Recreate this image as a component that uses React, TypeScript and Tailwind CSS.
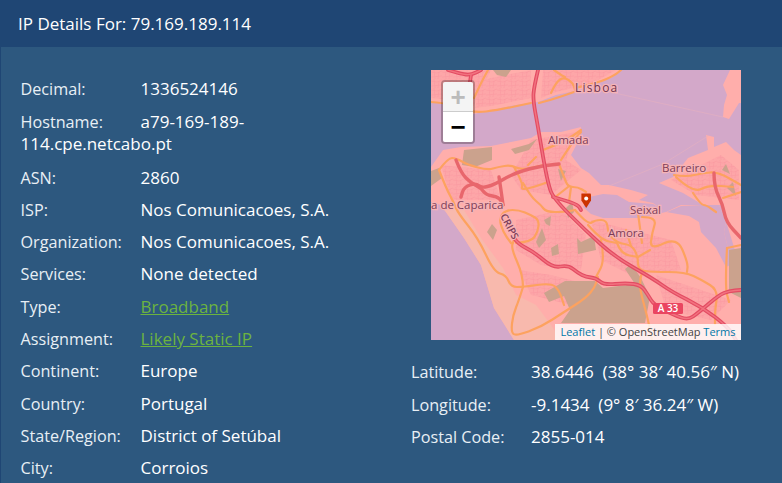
import React from "react";

const font = { fontFamily: '"Open Sans", sans-serif' };

// turns "x,y x,y ..." into a rounded path through the midpoints
function smooth(points: string) {
  const p = points.split(" ").map((s) => s.split(",").map(Number));
  let d = `M${p[0][0]} ${p[0][1]}`;
  for (let i = 1; i < p.length - 1; i++) {
    const mx = (p[i][0] + p[i + 1][0]) / 2;
    const my = (p[i][1] + p[i + 1][1]) / 2;
    d += ` Q${p[i][0]} ${p[i][1]} ${mx} ${my}`;
  }
  d += ` L${p[p.length - 1][0]} ${p[p.length - 1][1]}`;
  return d;
}

const landAreas = [
  "0,0 190,0 180,8 160,16 144,21 125,25 107,32 85,35 60,40 43,44 25,36 0,32",
  "299,0 292,15 296,25 293,35 292,47 298,49 308,33 310,33 310,0",
  "0,97 12,80 30,77 60,76 80,72 100,68 110,62 130,62 150,57 148,70 140,85 150,98 158,103 170,115 178,115 200,120 217,125 208,130 222,133 235,142 250,135 265,135 272,135 288,135 295,152 293,162 297,178 295,197 310,190 310,270 0,270",
  "228,113 242,107 257,88 277,80 275,65 283,67 283,77 295,72 303,80 310,85 310,200 290,135 272,135 252,123",
];

const waterAreas = [
  "152,137 158,127 172,124 186,125 198,132 222,134 236,142 250,136 272,135 288,135 295,152 293,162 297,178 295,197 285,178 270,162 268,152 258,146 235,142 208,148 172,148 160,144",
];

const urbanAreas = [
  "0,0 60,0 50,20 43,36 20,30 0,28",
  "50,10 100,0 100,28 60,36 44,38",
  "112,0 185,0 160,14 125,22 110,28",
  "100,70 145,62 135,90 150,100 120,125 90,120 80,105",
  "10,95 60,100 70,130 20,130",
  "85,150 130,140 155,165 150,200 110,195 85,180",
  "160,150 240,170 250,200 200,205 170,190",
  "240,110 290,85 308,100 308,130 265,125",
  "120,205 160,215 140,235 100,225 88,200",
  "225,205 300,230 280,250 235,240",
];

const brownAreas = [
  "113,223 134,211 164,211 172,218 204,214 194,199 200,194 210,208 219,227 214,253 130,253 139,240 133,226 118,232",
  "31,95 33,80 61,77 61,90 44,97",
  "0,101 8,98 11,108 0,116",
  "62,0 80,0 75,7 66,5",
  "80,79 98,74 106,69 98,80 84,84",
  "135,138 141,132 143,142 137,148",
  "113,150 120,146 119,156 115,154",
  "146,168 150,172 163,166 165,180 147,184",
  "105,172 111,158 115,170 108,178",
  "120,178 127,174 128,184 121,186",
  "298,180 310,178 310,228 298,222",
  "296,118 302,112 305,126",
  "127,99 135,101 130,111",
  "56,162 61,154 66,160 62,170",
  "291,100 295,94 299,104",
];

const orangeRoads = [
  "0,32 12,33 25,36 43,43 67,40 100,33",
  "43,28 50,13 57,0",
  "108,33 120,30 143,22",
  "120,23 125,12 133,7 142,13 144,20",
  "123,0 130,5 134,7",
  "144,18 167,13 184,5 190,0",
  "8,100 17,88 25,88 37,95 57,100 67,97 80,95 90,100 113,95",
  "8,100 15,118 23,133 27,143 47,168 63,202 75,205 80,217 92,217 120,213 128,220 133,235",
  "92,217 92,205 80,178 83,170",
  "92,217 88,230 82,245 80,262 85,266 110,257 133,242 155,228 164,217 167,207",
  "85,173 100,172 107,162 108,150 100,145 88,140 75,140 68,148 72,162 80,173",
  "83,97 92,113 90,120 103,117 117,112",
  "92,113 100,127 110,135 115,142 133,142 144,140",
  "105,87 97,95",
  "112,80 133,72 150,60",
  "130,90 143,70 150,62",
  "128,94 133,107 137,117 147,117 155,122",
  "123,128 137,117",
  "140,117 138,132",
  "144,140 157,155 164,150 176,150 177,163 186,173 201,175 207,187 207,200 221,202 254,202 271,210 287,220 284,240 284,254",
  "207,143 211,173",
  "211,147 226,147 221,163 219,180 246,167 257,193 256,202",
  "219,180 207,187",
  "211,203 207,213 216,245 221,270",
  "296,178 310,175",
  "296,178 294,217 298,232",
  "243,105 255,107 272,103 287,102 310,115",
  "245,107 262,123 278,115 302,117",
  "262,123 270,135 275,135 285,142",
  "292,128 310,122",
  "157,155 170,170 186,173",
  "170,170 174,190 165,207",
  "186,173 190,184 207,187",
  "195,160 200,176",
];

const motorways = [
  "107,0 103,17 102,30 107,57 112,87 117,113 122,128 154,160 184,187 221,208 241,222 271,237 297,257 305,270",
  "83,168 87,174 103,182 122,198 137,195 147,203 155,207 165,208 173,215 195,213 210,215 217,225 223,235 243,245 257,250 267,243 288,225 298,221 310,220",
  "122,127 133,130 147,135 150,140",
  "17,0 30,4 40,5 50,0",
  "40,5 39,12",
];

// the paler trunk roads on the west side and around Barreiro
const trunks = [
  "128,94 113,95 83,103 63,115 50,118 45,113 33,117 30,127",
  "25,90 30,103 40,113 50,118 55,125 68,127 72,135",
  "68,107 70,120 72,135",
  "283,103 283,117 292,135 295,152 310,168",
];

const labelClass = "fill-[#7d3d58] stroke-[#f7b4b6] [paint-order:stroke] text-[11.5px] font-medium";

function MapView() {
  return (
    <div className="relative ml-5 h-[270px] w-[310px] overflow-hidden">
      <svg viewBox="0 0 310 270" className="block h-[270px] w-[310px]" style={font}>
        <defs>
          <pattern id="streets" width="11" height="9" patternUnits="userSpaceOnUse">
            <rect width="11" height="9" fill="#fda6a8" />
            <path d="M0 2 L6 3 L11 1 M3 0 L4 9 M8 2 L7 9 M0 7 L11 6" stroke="#f8979f" strokeWidth="0.5" fill="none" />
          </pattern>
        </defs>
        <rect width="310" height="270" fill="#d3a8c9" />
        {landAreas.map((p) => (
          <polygon key={p} points={p} fill="#ffaeab" />
        ))}
        {waterAreas.map((p) => (
          <polygon key={p} points={p} fill="#d3a8c9" />
        ))}
        <polygon points="0,132 10,135 33,168 50,195 63,238 83,270 0,270" fill="#d3a8c9" />
        <polygon points="10,135 30,135 50,168 72,198 85,225 105,235 120,255 130,270 83,270 63,238 50,195 33,168" fill="#f8b9ad" />
        {urbanAreas.map((p) => (
          <polygon key={p} points={p} fill="url(#streets)" />
        ))}
        {brownAreas.map((p) => (
          <polygon key={p} points={p} fill="#cba28d" />
        ))}
        <path d="M178 116 L232 94 L277 66 M170 20 L292 47" stroke="#e5b0c0" strokeWidth="0.6" fill="none" />
        {orangeRoads.map((p) => (
          <path key={p} d={smooth(p)} fill="none" stroke="#fda25f" strokeWidth="2.2" strokeLinejoin="round" strokeLinecap="round" />
        ))}
        {trunks.map((p) => (
          <path key={p} d={smooth(p)} fill="none" stroke="#e8666c" strokeWidth="3.4" strokeLinejoin="round" strokeLinecap="round" />
        ))}
        {motorways.map((p) => (
          <path key={p} d={smooth(p)} fill="none" stroke="#e34c63" strokeWidth="3.8" strokeLinejoin="round" strokeLinecap="round" />
        ))}
        {motorways.map((p) => (
          <path key={p + "i"} d={smooth(p)} fill="none" stroke="#f2727f" strokeWidth="1.4" strokeLinejoin="round" strokeLinecap="round" />
        ))}
        <text x="144" y="22" strokeWidth="2.5" letterSpacing="1.2" className="fill-[#6e3350] stroke-[#f7b4b6] [paint-order:stroke] text-[12px] font-medium">Lisboa</text>
        <text x="117" y="74" strokeWidth="2.5" className={labelClass}>Almada</text>
        <text x="231" y="102" strokeWidth="2.5" className={labelClass}>Barreiro</text>
        <text x="0" y="139" strokeWidth="2.5" className={labelClass}>a de Caparica</text>
        <text x="199" y="144" strokeWidth="2.5" className={labelClass}>Seixal</text>
        <text x="177" y="167" strokeWidth="2.5" className={labelClass}>Amora</text>
        <text x="69" y="146" strokeWidth="2" transform="rotate(62 69 146)" className="fill-[#7d3d58] stroke-[#f7b4b6] [paint-order:stroke] text-[10px] font-semibold">CRIPS</text>
        <rect x="222" y="233" width="30" height="11" rx="1.5" fill="#ea4560" />
        <text x="237" y="242" textAnchor="middle" className="fill-white text-[10px] font-semibold">A 33</text>
        <path d="M150.5 123.5 h9 l0.5 1 v6 l-4.8 7.5 l-4.8 -7.5 v-6 z" fill="#cc3300" />
        <circle cx="155.2" cy="128.5" r="2" fill="#fff" />
      </svg>
      <div className="absolute left-[10px] top-[10px] w-[34px] rounded-[4px] border-2 border-black/25">
        <div className="flex h-[30px] items-center justify-center rounded-t-[2px] border-b border-[#ccc] bg-[#f4f4f4] text-[26px] font-bold leading-none text-[#bbb]" style={{ fontFamily: '"Liberation Sans", sans-serif' }}>+</div>
        <div className="flex h-[30px] items-center justify-center rounded-b-[2px] bg-white text-[26px] font-bold leading-none text-black" style={{ fontFamily: '"Liberation Sans", sans-serif' }}>−</div>
      </div>
      <div className="absolute bottom-0 right-0 flex h-4 w-[186px] items-center justify-center bg-white/80 text-[11px] text-[#444]">
        <span className="whitespace-pre">
          <span className="text-[#0078a8]">Leaflet</span> | © OpenStreetMap <span className="text-[#0078a8]">Terms</span>
        </span>
      </div>
    </div>
  );
}

function Row({ label, className = "mb-[9.9px] leading-[22.4px]", children }: { label: string; className?: string; children: React.ReactNode }) {
  return (
    <div className={`text-[16.2px] text-[#e8eff5] ${className}`}>
      <span className="inline-block w-[120px]">{label}</span>
      <span className="text-[17px] font-medium text-white">{children}</span>
    </div>
  );
}

function GreenLink({ children }: { children: React.ReactNode }) {
  return <a className="font-normal text-[#6cb33f] underline">{children}</a>;
}

export default function App() {
  return (
    <div className="h-[483px] w-full overflow-hidden bg-[#2d587f]" style={font}>
      <div className="flex h-[47px] items-center bg-[#1f4674] pl-[18px] text-[17px] text-white">
        IP Details For: 79.169.189.114
      </div>
      <div className="flex border-l border-[#1f4674]">
        <div className="w-[410px] shrink-0 pl-[19.5px] pt-[31px]">
          <div className="w-[340px]">
            <Row label="Decimal:" className="mb-[10.2px] leading-[22.4px]">1336524146</Row>
            <Row label="Hostname:" className="mb-[10.4px] leading-[22.8px]">a79-169-189-114.cpe.netcabo.pt</Row>
            <Row label="ASN:">2860</Row>
            <Row label="ISP:">Nos Comunicacoes, S.A.</Row>
            <Row label="Organization:">Nos Comunicacoes, S.A.</Row>
            <Row label="Services:">None detected</Row>
            <Row label="Type:"><GreenLink>Broadband</GreenLink></Row>
            <Row label="Assignment:"><GreenLink>Likely Static IP</GreenLink></Row>
            <Row label="Continent:">Europe</Row>
            <Row label="Country:">Portugal</Row>
            <Row label="State/Region:">District of Setúbal</Row>
            <Row label="City:">Corroios</Row>
          </div>
        </div>
        <div className="pt-[23px]">
          <MapView />
          <div className="mt-[21.3px]">
            <Row label="Latitude:">38.6446&nbsp; (38° 38′ 40.56″ N)</Row>
            <Row label="Longitude:">-9.1434&nbsp; (9° 8′ 36.24″ W)</Row>
            <Row label="Postal Code:">2855-014</Row>
          </div>
        </div>
      </div>
    </div>
  );
}
